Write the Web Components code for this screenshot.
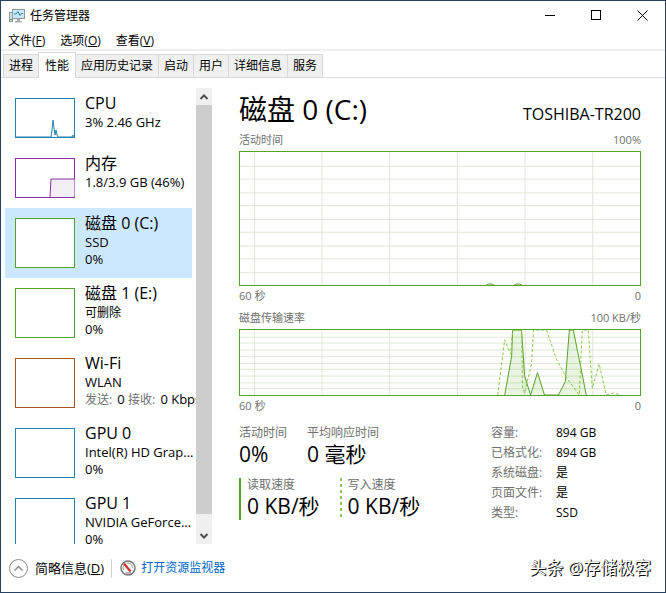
<!DOCTYPE html>
<html lang="zh-CN">
<head>
<meta charset="utf-8">
<title>任务管理器</title>
<style>
  body {
    margin: 0;
    background: #fff;
    color: #000;
    font: 12px/16px "Open Sans", "Noto Sans CJK SC", sans-serif;
  }
</style>
</head>
<body>
<task-window>
  <title-bar slot="title">任务管理器</title-bar>
  <menu-bar slot="menu">
    <menu-entry key="F">文件</menu-entry>
    <menu-entry key="O">选项</menu-entry>
    <menu-entry key="V">查看</menu-entry>
  </menu-bar>
  <tab-strip slot="tabs">
    <tab-item>进程</tab-item>
    <tab-item selected>性能</tab-item>
    <tab-item>应用历史记录</tab-item>
    <tab-item>启动</tab-item>
    <tab-item>用户</tab-item>
    <tab-item>详细信息</tab-item>
    <tab-item>服务</tab-item>
  </tab-strip>

  <resource-list slot="side">
    <resource-item name="CPU" color="#2482ae" short line="0,39 36,39 37,32 38,22 39,30 40,37 41,32 42,37 43,39 57,39 58,37 59,39">3% 2.46 GHz</resource-item>
    <resource-item name="内存" color="#8b2fa8" short fill="#f3eff5" line="35,39 36,21 60,21 60,39">1.8/3.9 GB (46%)</resource-item>
    <resource-item name="磁盘 0 (C:)" color="#57a22d" selected>SSD<span slot="extra">0%</span></resource-item>
    <resource-item name="磁盘 1 (E:)" color="#57a22d"><han-text>可删除</han-text><span slot="extra">0%</span></resource-item>
    <resource-item name="Wi-Fi" color="#a5561c">WLAN<span slot="extra"><han-text soft>发送:</han-text> 0 <han-text soft>接收:</han-text> 0 Kbps</span></resource-item>
    <resource-item name="GPU 0" color="#2482ae">Intel(R) HD Grap...<span slot="extra">0%</span></resource-item>
    <resource-item name="GPU 1" color="#2482ae">NVIDIA GeForce...<span slot="extra">0%</span></resource-item>
  </resource-list>

  <disk-panel slot="main">
    <span slot="heading">磁盘 0 (C:)</span>
    <span slot="model">TOSHIBA-TR200</span>
    <usage-graph slot="graphs" label="活动时间" max="100%" size="135"
      read="0,136 246,136 250,134 253,134 257,136 274,136 278,134 281,134 285,136"></usage-graph>
    <usage-graph slot="graphs" label="磁盘传输速率" max="100 KB/秒" size="67"
      read="266,67 273,27 274,0 283,0 286,47 292,67 299,44 306,67 320,67 327,53 331,0 335,0 343,41 348,67"
      write="259,67 266,10 272,25 274,0 283,0 284,60 286,65 293,35 295,0 308,0 318,30 328,49 341,67 344,0 350,0 354,60 361,35 368,67 375,65 383,67"></usage-graph>
    <stat-value slot="stats" label="活动时间">0%</stat-value>
    <stat-value slot="stats" label="平均响应时间">0 毫秒</stat-value>
    <stat-value slot="rates" label="读取速度" mark="solid">0 KB/秒</stat-value>
    <stat-value slot="rates" label="写入速度" mark="dotted">0 KB/秒</stat-value>
    <disk-facts slot="facts"></disk-facts>
  </disk-panel>

  <status-bar slot="foot">头条 @存储极客</status-bar>
</task-window>

<script>
/**
 * Registers an element that renders its markup into an open shadow root.
 *
 * @param {string} name the tag name.
 * @param {Function} render returns the markup for the host element.
 */
function define (name, render) {
  customElements.define(name, class extends HTMLElement {
    constructor () {
      super()
      this.attachShadow({ mode: 'open' })
    }

    connectedCallback () {
      const template = document.createElement('template')
      template.innerHTML = render(this)
      this.shadowRoot.replaceChildren(template.content.cloneNode(true))
    }
  })
}

define('task-window', () => `
  <style>
    :host {
      display: flex;
      flex-direction: column;
      box-sizing: border-box;
      height: 100vh;
      border: 1px solid #24415f;
    }
    main {
      display: flex;
      flex: 1;
      min-height: 0;
      padding-top: 10px;
    }
    slot[name=side]::slotted(*) { flex: none; width: 207px; }
    slot[name=main]::slotted(*) { flex: 1; min-width: 0; }
  </style>
  <slot name="title"></slot>
  <slot name="menu"></slot>
  <slot name="tabs"></slot>
  <main>
    <slot name="side"></slot>
    <slot name="main"></slot>
  </main>
  <slot name="foot"></slot>
`)

define('title-bar', () => `
  <style>
    :host { display: flex; align-items: center; height: 29px; padding-left: 8px; }
    .name { flex: 1; margin-left: 5px; }
    button {
      display: grid;
      place-items: center;
      width: 46px;
      height: 29px;
      padding: 0;
      border: 0;
      background: none;
    }
    svg { display: block; }
  </style>
  <svg width="16" height="16" viewBox="0 0 16 16">
    <rect x="0.5" y="4.5" width="3" height="9" fill="#d8dde0" stroke="#8c979d"/>
    <path d="M1 11.5h2" stroke="#4f9a55"/>
    <rect x="3.5" y="1.5" width="12" height="9" fill="#c9e8f5" stroke="#8b999f"/>
    <path d="M5 6h2l2-2.500 2 4 1.500-2H14" fill="none" stroke="#2684aa"/>
    <path d="M8 11h3v2h2v1.500H6V13h2z" fill="#a4afb4"/>
  </svg>
  <span class="name"><slot></slot></span>
  <button aria-label="最小化"><svg width="11" height="11"><path d="M0 5.500h10" stroke="#000"/></svg></button>
  <button aria-label="最大化"><svg width="11" height="11"><rect x="0.5" y="0.5" width="9" height="9" fill="none" stroke="#000"/></svg></button>
  <button aria-label="关闭"><svg width="11" height="11"><path d="M.5.5l10 10m0-10l-10 10" stroke="#000"/></svg></button>
`)

define('menu-bar', () => `
  <style>
    :host {
      display: flex;
      gap: 15px;
      height: 19px;
      padding: 0 7px;
      border-bottom: 2px solid #f0f0f0;
    }
  </style>
  <slot></slot>
`)

define('menu-entry', el => `
  <style>
    :host { display: block; }
    button { padding: 0; border: 0; background: none; font: inherit; line-height: 22px; }
  </style>
  <button><slot></slot>(<u>${el.getAttribute('key')}</u>)</button>
`)

define('tab-strip', () => `
  <style>
    :host {
      display: flex;
      align-items: flex-end;
      height: 26px;
      padding-left: 2px;
      border-bottom: 1px solid #d9d9d9;
    }
  </style>
  <slot></slot>
`)

define('tab-item', el => `
  <style>
    :host { display: block; margin-left: -1px; }
    :host(:first-child) { margin-left: 0; }
    button {
      display: block;
      height: 23px;
      padding: 0 5px;
      border: 1px solid #d9d9d9;
      border-bottom: 0;
      background: #f0f0f0;
      font: inherit;
      line-height: 22px;
    }
    :host([selected]) { z-index: 1; margin-bottom: -1px; }
    :host([selected]) button { height: 26px; padding: 0 6px; background: #fff; }
  </style>
  <button role="tab" aria-selected="${el.hasAttribute('selected')}"><slot></slot></button>
`)

define('resource-list', () => `
  <style>
    :host { display: flex; justify-content: space-between; margin-left: 4px; }
    .items { width: 191px; overflow: hidden; }
    .bar { display: flex; flex-direction: column; width: 16px; background: #f0f0f0; }
    .thumb { flex: 1; margin-bottom: 13px; background: #cdcdcd; }
    button { height: 17px; padding: 0; border: 0; background: none; }
    svg { display: block; margin: auto; }
  </style>
  <div class="items"><slot></slot></div>
  <div class="bar">
    <button aria-label="向上滚动"><svg width="10" height="8"><path d="M1.500 6L5 2.500 8.500 6" fill="none" stroke="#505050" stroke-width="2"/></svg></button>
    <div class="thumb"></div>
    <button aria-label="向下滚动"><svg width="10" height="8"><path d="M1.500 2L5 5.500 8.500 2" fill="none" stroke="#505050" stroke-width="2"/></svg></button>
  </div>
`)

define('resource-item', el => {
  const color = el.getAttribute('color')
  const line = el.getAttribute('line') || ''
  return `
  <style>
    :host { display: block; }
    button {
      display: flex;
      gap: 10px;
      box-sizing: border-box;
      width: 187px;
      height: 70px;
      padding: 6px 0 0 10px;
      border: 0;
      background: none;
      color: #000;
      font: inherit;
      font-size: 13px;
      line-height: 17px;
      text-align: left;
      white-space: nowrap;
    }
    :host([short]) button { height: 60px; }
    :host([selected]) button { background: #cce8ff; }
    .chart {
      flex: none;
      box-sizing: border-box;
      width: 60px;
      height: 50px;
      margin-top: 4px;
      border: 1px solid ${color};
      background: #fff;
    }
    :host([short]) .chart { height: 40px; }
    svg { display: block; margin: -1px; }
    .name { display: block; margin-bottom: 2px; font-size: 16px; line-height: 18px; }
    .line { display: block; height: 17px; }
  </style>
  <button>
    <span class="chart"><svg width="60" height="40"><polyline points="${line}" fill="${el.getAttribute('fill') || 'none'}" stroke="${color}"/></svg></span>
    <span>
      <span class="name">${el.getAttribute('name')}</span>
      <span class="line"><slot></slot></span>
      <span class="line"><slot name="extra"></slot></span>
    </span>
  </button>`
})

define('han-text', () => `
  <style>
    :host { font-size: 12px; }
    :host([soft]) { margin-right: 2px; color: #707070; }
  </style>
  <slot></slot>
`)

define('disk-panel', () => `
  <style>
    :host { display: block; padding: 0 24px 0 27px; }
    header { display: flex; justify-content: space-between; height: 44px; }
    h1 { margin: 0; font-size: 28px; font-weight: 400; line-height: 42px; }
    .model { font-size: 16px; line-height: 52px; }
    .details { display: flex; margin-top: 11px; }
    .left { width: 252px; }
    .row { display: flex; gap: 20px; margin-bottom: 10px; }
  </style>
  <header>
    <h1><slot name="heading"></slot></h1>
    <span class="model"><slot name="model"></slot></span>
  </header>
  <slot name="graphs"></slot>
  <div class="details">
    <div class="left">
      <div class="row"><slot name="stats"></slot></div>
      <div class="row"><slot name="rates"></slot></div>
    </div>
    <slot name="facts"></slot>
  </div>
`)

define('usage-graph', el => {
  const size = Number(el.getAttribute('size'))
  const read = el.getAttribute('read')
  let grid = ''
  for (let x = 14; x < 400; x += 68) grid += `M${x + 0.5} 0V${size}`
  for (let i = 1; i < 10; i++) grid += `M0 ${Math.round(size * i / 10) + 0.5}H402`
  return `
  <style>
    :host { display: block; margin-bottom: 5px; color: #707070; font-size: 11px; }
    div { display: flex; justify-content: space-between; height: 19px; line-height: 19px; }
    .top { line-height: 16px; }
    svg {
      display: block;
      box-sizing: border-box;
      width: 100%;
      height: ${size}px;
      border: 1px solid #57a22d;
    }
    path, polyline { vector-effect: non-scaling-stroke; fill: none; }
    .grid { stroke: #dfe8d5; }
    .read { fill: #4da60c; fill-opacity: .12; stroke: #57a22d; }
    .write { stroke: #8cc94a; stroke-dasharray: 3 2; }
  </style>
  <div class="top"><span>${el.getAttribute('label')}</span><span>${el.getAttribute('max')}</span></div>
  <svg viewBox="0 0 402 ${size}" preserveAspectRatio="none">
    <path class="grid" d="${grid}"/>
    <polyline class="read" points="${read}"/>
    <polyline class="write" points="${el.getAttribute('write') || ''}"/>
  </svg>
  <div><span>60 秒</span><span>0</span></div>`
})

define('stat-value', el => `
  <style>
    :host { display: block; }
    :host([mark]) { padding-left: 6px; }
    :host([mark=solid]) { border-left: 2px solid #57a22d; }
    :host([mark=dotted]) {
      padding-left: 8px;
      background: repeating-linear-gradient(#8cc94a 0 3px, transparent 3px 6px) left / 2px 100% no-repeat;
    }
    .label { color: #707070; line-height: 14px; }
    .value { font-size: 21px; line-height: 28px; }
  </style>
  <div class="label">${el.getAttribute('label')}</div>
  <div class="value"><slot></slot></div>
`)

define('disk-facts', () => `
  <style>
    :host { display: block; }
    table { border-collapse: collapse; }
    th, td { height: 20px; padding: 0; line-height: 14px; text-align: left; vertical-align: top; }
    th { width: 65px; color: #707070; font-weight: 400; }
  </style>
  <table>
    <tr><th scope="row">容量:</th><td>894 GB</td></tr>
    <tr><th scope="row">已格式化:</th><td>894 GB</td></tr>
    <tr><th scope="row">系统磁盘:</th><td>是</td></tr>
    <tr><th scope="row">页面文件:</th><td>是</td></tr>
    <tr><th scope="row">类型:</th><td>SSD</td></tr>
  </table>
`)

define('status-bar', () => `
  <style>
    :host { display: flex; align-items: center; height: 48px; padding: 0 14px 0 8px; }
    button {
      display: flex;
      align-items: center;
      gap: 7px;
      padding: 0 7px 0 0;
      border: 0;
      border-right: 1px solid #d0d0d0;
      background: none;
      font: inherit;
      font-size: 13px;
      line-height: 16px;
    }
    a { display: flex; align-items: center; gap: 5px; margin-left: 8px; color: #0066cc; text-decoration: none; }
    .mark { margin-left: auto; color: #fff; font-size: 17px; text-shadow: 1px 1px 0 #111, 1px 0 0 #333; }
  </style>
  <button>
    <svg width="19" height="19"><circle cx="9.500" cy="9.500" r="9" fill="#fff" stroke="#8a8a8a"/><path d="M5.500 11.500l4-4 4 4" fill="none" stroke="#8a8a8a" stroke-width="1.500"/></svg>
    <span>简略信息(<u>D</u>)</span>
  </button>
  <a href="#resmon">
    <svg width="16" height="16"><circle cx="8" cy="8" r="7" fill="#f4f6f4" stroke="#777" stroke-width="1.500"/><path d="M3.500 10a5 5 0 0 1 1-5.500M7 3a5 5 0 0 1 5.500 5" fill="none" stroke="#8fb58f"/><path d="M4 3.500l6.500 8" stroke="#d02a2a" stroke-width="2"/><path d="M6 13h5" stroke="#777"/></svg>
    <span>打开资源监视器</span>
  </a>
  <span class="mark"><slot></slot></span>
`)
</script>
</body>
</html>
